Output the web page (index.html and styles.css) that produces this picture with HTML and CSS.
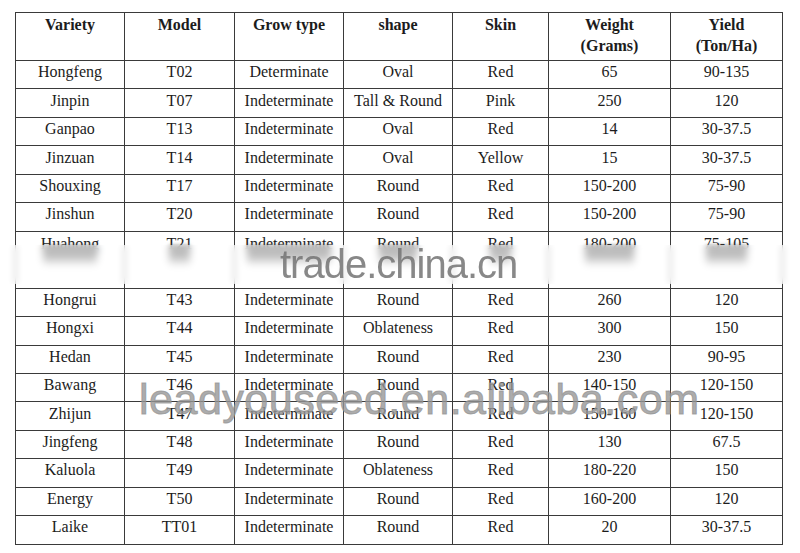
FILE: index.html
```html
<!DOCTYPE html>
<html>
<head>
<meta charset="utf-8">
<link rel="stylesheet" href="styles.css">
</head>
<body>
<div class="page">
  <table class="grid">
    <colgroup>
      <col class="c1"><col class="c2"><col class="c3"><col class="c4"><col class="c5"><col class="c6"><col class="c7">
    </colgroup>
    <thead>
      <tr>
        <th>Variety</th><th>Model</th><th>Grow type</th><th>shape</th><th>Skin</th><th>Weight<br>(Grams)</th><th>Yield<br>(Ton/Ha)</th>
      </tr>
    </thead>
    <tbody>
      <tr><td>Hongfeng</td><td>T02</td><td>Determinate</td><td>Oval</td><td>Red</td><td>65</td><td>90-135</td></tr>
      <tr><td>Jinpin</td><td>T07</td><td>Indeterminate</td><td>Tall &amp; Round</td><td>Pink</td><td>250</td><td>120</td></tr>
      <tr><td>Ganpao</td><td>T13</td><td>Indeterminate</td><td>Oval</td><td>Red</td><td>14</td><td>30-37.5</td></tr>
      <tr><td>Jinzuan</td><td>T14</td><td>Indeterminate</td><td>Oval</td><td>Yellow</td><td>15</td><td>30-37.5</td></tr>
      <tr><td>Shouxing</td><td>T17</td><td>Indeterminate</td><td>Round</td><td>Red</td><td>150-200</td><td>75-90</td></tr>
      <tr><td>Jinshun</td><td>T20</td><td>Indeterminate</td><td>Round</td><td>Red</td><td>150-200</td><td>75-90</td></tr>
      <tr class="smudged">
        <td><span class="sm">Huahong</span></td><td><span class="sm">T21</span></td><td><span class="sm">Indeterminate</span></td><td><span class="sm">Round</span></td><td><span class="sm">Red</span></td><td><span class="sm">180-200</span></td><td><span class="sm">75-105</span></td>
      </tr>
      <tr><td>Hongrui</td><td>T43</td><td>Indeterminate</td><td>Round</td><td>Red</td><td>260</td><td>120</td></tr>
      <tr><td>Hongxi</td><td>T44</td><td>Indeterminate</td><td>Oblateness</td><td>Red</td><td>300</td><td>150</td></tr>
      <tr><td>Hedan</td><td>T45</td><td>Indeterminate</td><td>Round</td><td>Red</td><td>230</td><td>90-95</td></tr>
      <tr><td>Bawang</td><td>T46</td><td>Indeterminate</td><td>Round</td><td>Red</td><td>140-150</td><td>120-150</td></tr>
      <tr><td>Zhijun</td><td>T47</td><td>Indeterminate</td><td>Round</td><td>Red</td><td>150-160</td><td>120-150</td></tr>
      <tr><td>Jingfeng</td><td>T48</td><td>Indeterminate</td><td>Round</td><td>Red</td><td>130</td><td>67.5</td></tr>
      <tr><td>Kaluola</td><td>T49</td><td>Indeterminate</td><td>Oblateness</td><td>Red</td><td>180-220</td><td>150</td></tr>
      <tr><td>Energy</td><td>T50</td><td>Indeterminate</td><td>Round</td><td>Red</td><td>160-200</td><td>120</td></tr>
      <tr><td>Laike</td><td>TT01</td><td>Indeterminate</td><td>Round</td><td>Red</td><td>20</td><td>30-37.5</td></tr>
    </tbody>
  </table>
  <div class="blurband"></div>
  <div class="wm wm-trade">trade.china.cn</div>
  <div class="wm wm-shop">leadyouseed.en.alibaba.com</div>
</div>
</body>
</html>
```

FILE: styles.css
```css
html, body {
  margin: 0;
  padding: 0;
  background: #ffffff;
}

.page {
  position: relative;
  width: 800px;
  height: 553px;
  overflow: hidden;
  padding: 12px 0 0 15px;
  box-sizing: border-box;
}

.grid {
  border-collapse: collapse;
  table-layout: fixed;
  width: 767px;
  font-family: "Liberation Serif", "Times New Roman", "DejaVu Serif", serif;
  font-size: 16px;
  color: #1c1c1c;
}

.c1 { width: 109px; }
.c2 { width: 110px; }
.c3 { width: 109px; }
.c4 { width: 109px; }
.c5 { width: 96px; }
.c6 { width: 122px; }
.c7 { width: 112px; }

.grid th,
.grid td {
  border: 1px solid #3a3a3a;
  text-align: center;
  padding: 0 2px;
  white-space: nowrap;
  overflow: hidden;
}

.grid th {
  height: 48px;
  vertical-align: top;
  font-weight: bold;
  line-height: 21px;
  padding-top: 1px;
  box-sizing: border-box;
}

.grid td {
  height: 28.45px;
  line-height: 18px;
  vertical-align: middle;
  padding-top: 0;
  padding-bottom: 5px;
  box-sizing: border-box;
}

.grid tr.smudged td {
  height: 57px;
  vertical-align: top;
  padding-top: 3px;
  padding-bottom: 0;
}

.sm {
  position: relative;
  display: inline-block;
}

.sm::after {
  content: "";
  position: absolute;
  left: 2px;
  right: 2px;
  top: 11px;
  height: 20px;
  background: linear-gradient(#5e5e5e, #8e8e8e 60%, rgba(200,200,200,0));
  filter: blur(2px);
}

.blurband {
  position: absolute;
  left: 0;
  right: 0;
  top: 245px;
  height: 39px;
  background: rgba(255, 255, 255, 0.5);
  backdrop-filter: blur(3px);
}

.wm {
  position: absolute;
  font-family: "Liberation Sans", Arial, sans-serif;
  white-space: nowrap;
  pointer-events: none;
}

.wm-trade {
  left: 280px;
  top: 244px;
  font-size: 40px;
  line-height: 40px;
  letter-spacing: -1px;
  color: rgba(115, 115, 115, 0.85);
}

.wm-shop {
  left: 139px;
  top: 378px;
  font-size: 43px;
  line-height: 43px;
  letter-spacing: 0.5px;
  color: rgba(150, 150, 150, 0.8);
  -webkit-text-stroke: 1px rgba(150, 150, 150, 0.8);
}
```
